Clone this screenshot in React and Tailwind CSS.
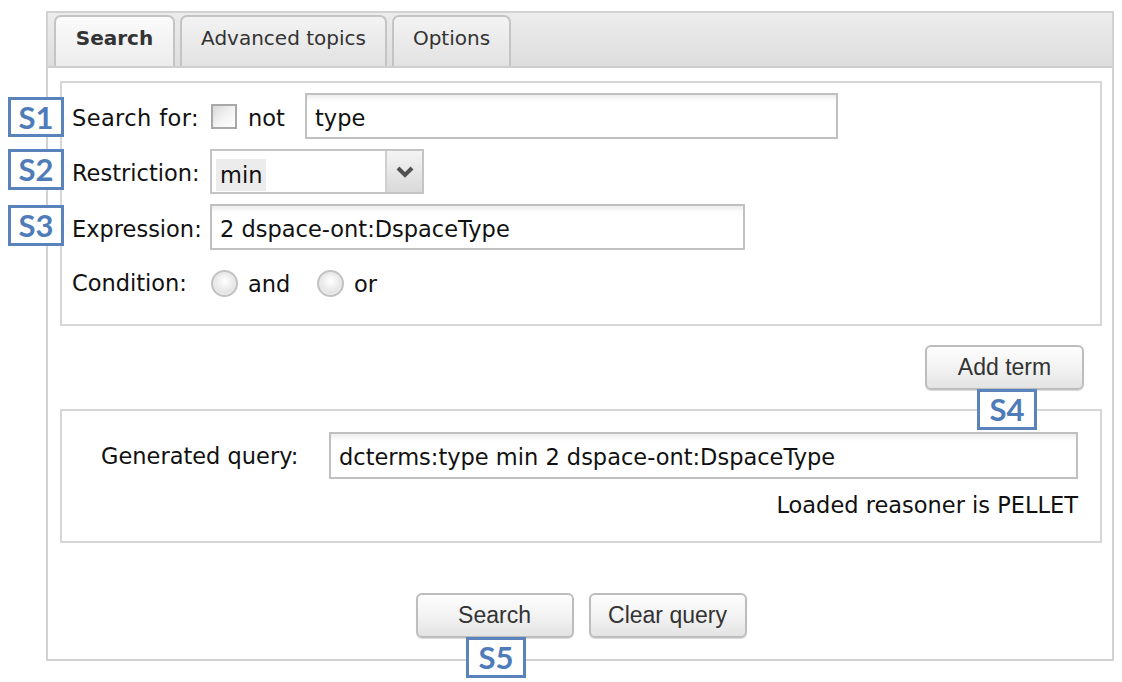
import React from "react";

const FONT = { fontFamily: '"DejaVu Sans", Verdana, sans-serif' };
const BTN_FONT = { fontFamily: '"Liberation Sans", Arial, sans-serif' };
const TAG_FONT = { fontFamily: 'Lato, "Open Sans", sans-serif' };

function Tag({ label, className }) {
  return (
    <div
      className={
        "absolute flex items-center justify-center border-[3px] border-[#5a82bb] bg-white text-[31px] font-bold text-[#4f7cb8] leading-none " +
        className
      }
      style={TAG_FONT}
    >
      {label}
    </div>
  );
}

function Tab({ label, active, w }) {
  return (
    <div
      className={
        "flex h-[51px] items-center justify-center rounded-t-[7px] border-2 border-b-0 border-[#c4c4c4] pb-[8px] text-[20px] text-[#333] " +
        (active
          ? "bg-gradient-to-b from-[#fbfbfb] to-[#ececec] font-bold text-[#222]"
          : "bg-gradient-to-b from-[#f3f3f3] to-[#e2e2e2]") +
        " " +
        w
      }
    >
      {label}
    </div>
  );
}

function TextBox({ value, className }) {
  return (
    <div
      className={
        "flex items-center border-2 border-[#c0c0c0] bg-white pl-[8px] pt-[5px] text-[22.5px] text-[#111] shadow-[inset_0_7px_6px_-5px_rgba(0,0,0,0.10)] " +
        className
      }
    >
      {value}
    </div>
  );
}

function Radio() {
  return (
    <div className="h-[27px] w-[27px] rounded-full border-2 border-[#c2c2c2] bg-[radial-gradient(circle_at_50%_40%,#ffffff_0%,#e8e8e8_55%,#c9c9c9_100%)] shadow-[inset_0_0_0_2px_#e9e9e9]" />
  );
}

function Button({ label, w }) {
  return (
    <div
      className={
        "flex h-[45px] items-center justify-center rounded-[6px] border-2 border-[#bdbdbd] bg-gradient-to-b from-[#fdfdfd] via-[#f3f3f3] to-[#e3e3e3] text-[23px] text-[#333] shadow-[0_1px_1px_rgba(0,0,0,0.15)] " +
        w
      }
      style={BTN_FONT}
    >
      {label}
    </div>
  );
}

export default function App() {
  return (
    <div className="relative h-[682px] w-[1122px] overflow-hidden bg-white" style={FONT}>
      <div className="ml-[46px] mt-[11px] flex h-[650px] w-[1068px] flex-col border-2 border-[#d2d2d2] bg-white">
        {/* tab strip */}
        <div className="flex h-[55px] items-end gap-[5px] border-b-2 border-[#cfcfcf] bg-gradient-to-b from-[#ececec] to-[#dedede] pl-[6px]">
          <Tab label="Search" active w="w-[121px]" />
          <Tab label="Advanced topics" w="w-[207px]" />
          <Tab label="Options" w="w-[119px]" />
        </div>

        <div className="ml-[12px] mr-[10px] flex flex-col">
          {/* panel 1 */}
          <div className="mt-[13px] flex h-[245px] flex-col border-2 border-[#d6d6d6] pl-[10px] pt-[10px]">
            <div className="flex h-[46px] items-center text-[22.5px] text-[#111]">
              <div className="w-[139px] pt-[5px] tracking-[0.4px]">Search for:</div>
              <div className="h-[25px] w-[26px] border-2 border-[#a8a8a8] bg-gradient-to-br from-[#d8d8d8] via-[#f2f2f2] to-[#ffffff]" />
              <div className="ml-[11px] w-[57px] pt-[5px]">not</div>
              <TextBox value="type" className="h-[46px] w-[533px]" />
            </div>
            <div className="mt-[10px] flex h-[45px] items-center text-[22.5px] text-[#111]">
              <div className="w-[138px] pt-[5px]">Restriction:</div>
              <div className="flex h-[45px] w-[214px] border-2 border-[#c4c4c4] bg-white">
                <div className="flex flex-1 items-center pl-[4px] pt-[6px]">
                  <span className="bg-[#ececec] px-[4px] leading-[32px]">min</span>
                </div>
                <div className="flex w-[37px] items-center justify-center border-l-2 border-[#cfcfcf] bg-gradient-to-b from-[#f4f4f4] to-[#d9d9d9]">
                  <svg width="18" height="12" viewBox="0 0 18 12">
                    <path d="M2 2 L9 9 L16 2" fill="none" stroke="#505050" strokeWidth="4" strokeLinejoin="miter" />
                  </svg>
                </div>
              </div>
            </div>
            <div className="mt-[10px] flex h-[46px] items-center text-[22.5px] text-[#111]">
              <div className="w-[138px] pt-[5px]">Expression:</div>
              <TextBox value="2 dspace-ont:DspaceType" className="h-[46px] w-[535px]" />
            </div>
            <div className="mt-[19px] flex h-[28px] items-center text-[22.5px] text-[#111]">
              <div className="w-[139px] pt-[2px]">Condition:</div>
              <Radio />
              <div className="ml-[10px] w-[69px] pt-[4px]">and</div>
              <Radio />
              <div className="ml-[10px] pt-[4px]">or</div>
            </div>
          </div>

          {/* add term */}
          <div className="mt-[19px] flex justify-end pr-[18px]">
            <Button label="Add term" w="w-[159px]" />
          </div>

          {/* panel 2 */}
          <div className="mt-[19px] flex h-[134px] flex-col border-2 border-[#d6d6d6] pl-[39px] pr-[22px] pt-[21px]">
            <div className="flex h-[47px] items-center text-[22.5px] text-[#111]">
              <div className="w-[228px] pt-[2px]">Generated query:</div>
              <TextBox value="dcterms:type min 2 dspace-ont:DspaceType" className="h-[47px] flex-1" />
            </div>
            <div className="mt-[11px] text-right text-[22.5px] leading-[30px] text-[#111]">
              Loaded reasoner is PELLET
            </div>
          </div>

          {/* bottom buttons */}
          <div className="mt-[50px] flex justify-center gap-[15px]">
            <Button label="Search" w="w-[158px]" />
            <Button label="Clear query" w="w-[158px]" />
          </div>
        </div>
      </div>

      <Tag label="S1" className="left-[8px] top-[97px] h-[40px] w-[56px]" />
      <Tag label="S2" className="left-[8px] top-[149px] h-[41px] w-[56px]" />
      <Tag label="S3" className="left-[8px] top-[205px] h-[41px] w-[56px]" />
      <Tag label="S4" className="left-[977px] top-[389px] h-[41px] w-[60px]" />
      <Tag label="S5" className="left-[466px] top-[637px] h-[41px] w-[60px]" />
    </div>
  );
}
